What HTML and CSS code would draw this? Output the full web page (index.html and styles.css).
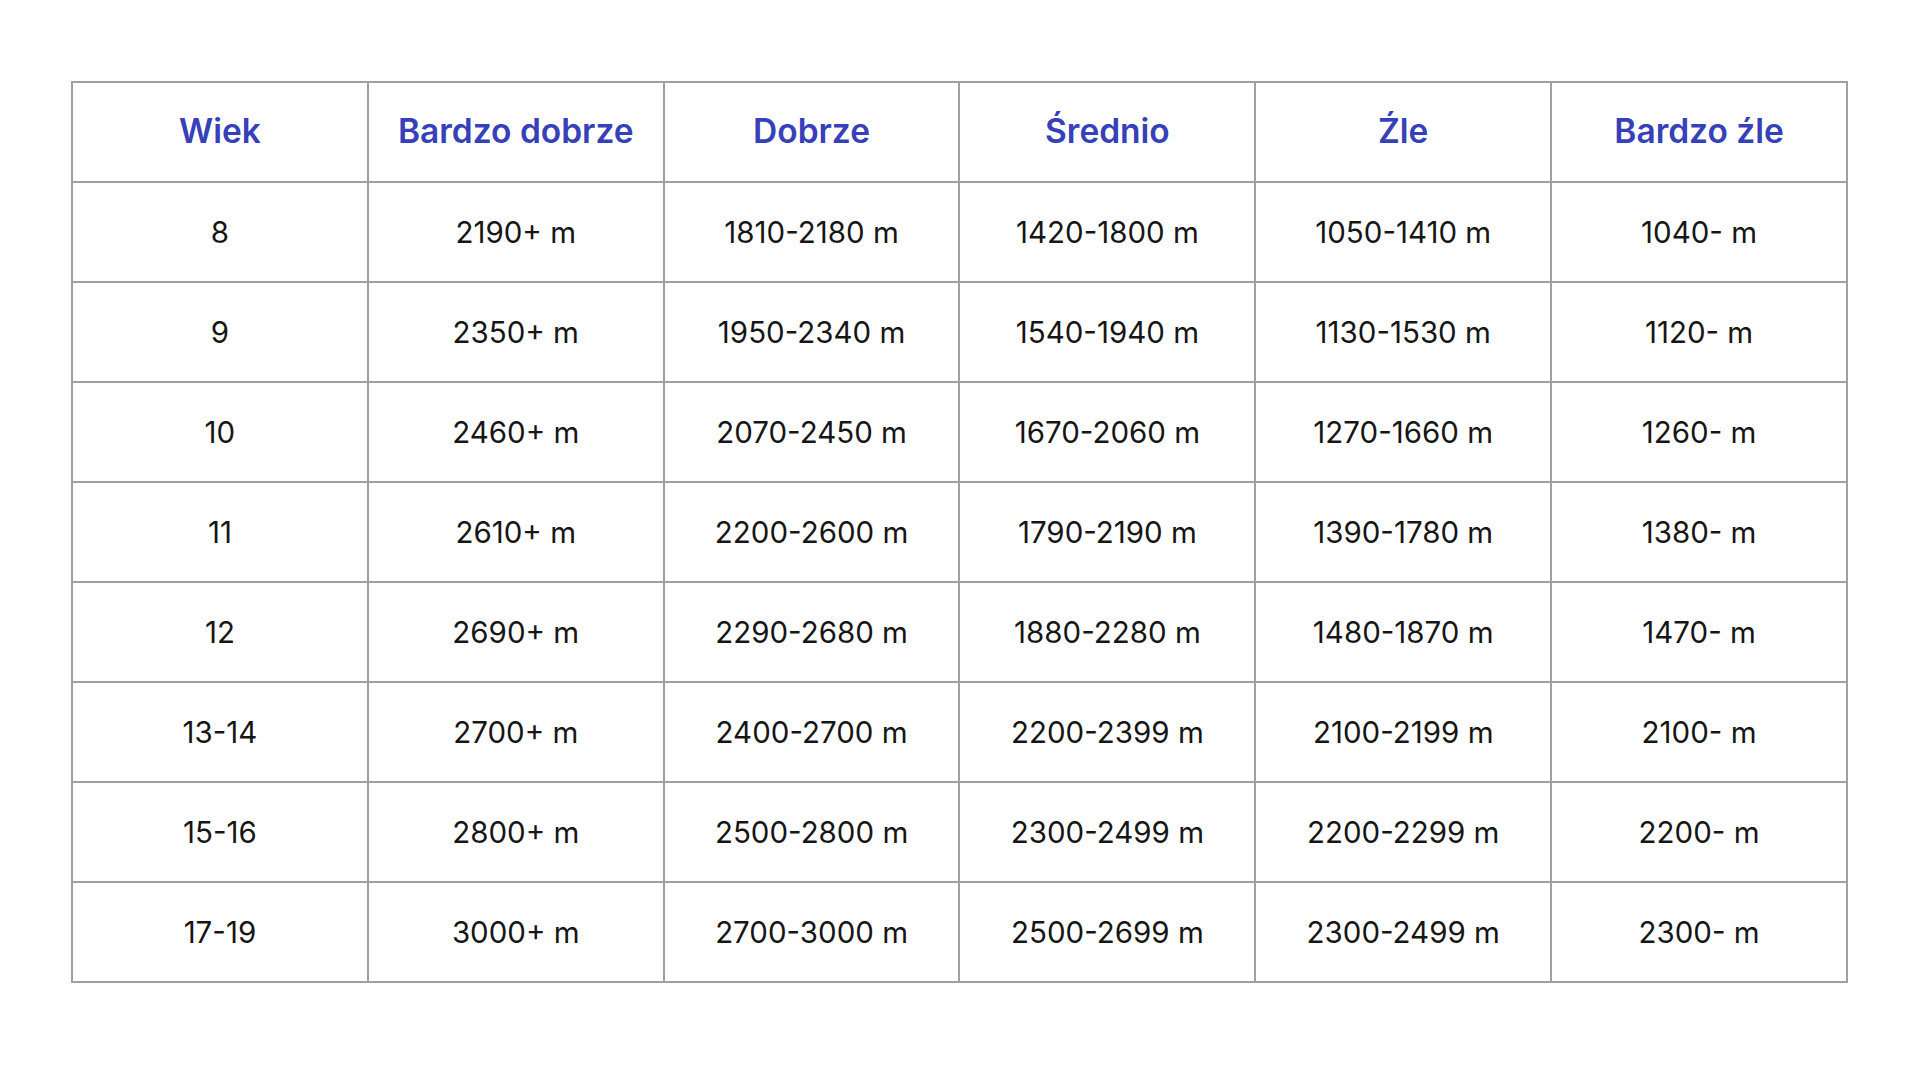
FILE: index.html
```html
<!DOCTYPE html>
<html lang="pl">
<head>
<meta charset="utf-8">
<link rel="stylesheet" href="styles.css">
</head>
<body>
<div class="wrap">
<table class="norms">
<thead>
<tr><th>Wiek</th><th>Bardzo dobrze</th><th>Dobrze</th><th>Średnio</th><th>Źle</th><th>Bardzo źle</th></tr>
</thead>
<tbody>
<tr><td>8</td><td>2190+ m</td><td>1810-2180 m</td><td>1420-1800 m</td><td>1050-1410 m</td><td>1040- m</td></tr>
<tr><td>9</td><td>2350+ m</td><td>1950-2340 m</td><td>1540-1940 m</td><td>1130-1530 m</td><td>1120- m</td></tr>
<tr><td>10</td><td>2460+ m</td><td>2070-2450 m</td><td>1670-2060 m</td><td>1270-1660 m</td><td>1260- m</td></tr>
<tr><td>11</td><td>2610+ m</td><td>2200-2600 m</td><td>1790-2190 m</td><td>1390-1780 m</td><td>1380- m</td></tr>
<tr><td>12</td><td>2690+ m</td><td>2290-2680 m</td><td>1880-2280 m</td><td>1480-1870 m</td><td>1470- m</td></tr>
<tr><td>13-14</td><td>2700+ m</td><td>2400-2700 m</td><td>2200-2399 m</td><td>2100-2199 m</td><td>2100- m</td></tr>
<tr><td>15-16</td><td>2800+ m</td><td>2500-2800 m</td><td>2300-2499 m</td><td>2200-2299 m</td><td>2200- m</td></tr>
<tr><td>17-19</td><td>3000+ m</td><td>2700-3000 m</td><td>2500-2699 m</td><td>2300-2499 m</td><td>2300- m</td></tr>
</tbody>
</table>
</div>
</body>
</html>
```
FILE: styles.css
```css
html, body {
  margin: 0;
  padding: 0;
  background: #ffffff;
}
body {
  font-family: "Inter", "Noto Sans", sans-serif;
}
.wrap {
  padding: 81px 72px 0 71px;
}
.norms {
  width: 1777px;
  border-collapse: collapse;
  table-layout: fixed;
  border: 2px solid #a0a0a0;
}
.norms th, .norms td {
  border: 2px solid #a0a0a0;
  height: 98px;
  padding: 0;
  text-align: center;
  vertical-align: middle;
}
.norms th {
  height: 95px;
  padding-bottom: 3px;
  font-size: 33.5px;
  font-weight: 600;
  color: #3640b8;
}
.norms td {
  font-size: 29.5px;
  font-weight: 400;
  color: #161616;
}
```
